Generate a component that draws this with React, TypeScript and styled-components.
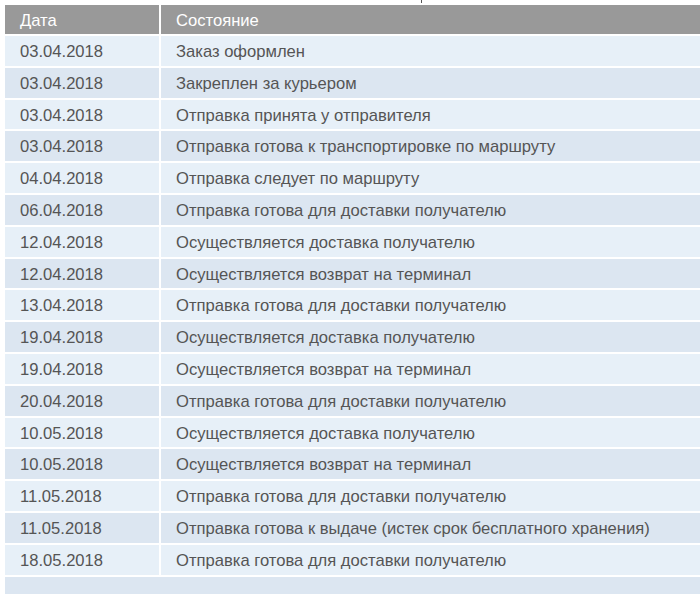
import styled, { createGlobalStyle } from 'styled-components';

const GlobalStyle = createGlobalStyle`
  html, body {
    margin: 0;
    padding: 0;
    background: #ffffff;
    overflow: hidden;
  }
  body {
    font-family: "Liberation Sans", Arial, sans-serif;
  }
`;

const rows: [string, string][] = [
  ['03.04.2018', 'Заказ оформлен'],
  ['03.04.2018', 'Закреплен за курьером'],
  ['03.04.2018', 'Отправка принята у отправителя'],
  ['03.04.2018', 'Отправка готова к транспортировке по маршруту'],
  ['04.04.2018', 'Отправка следует по маршруту'],
  ['06.04.2018', 'Отправка готова для доставки получателю'],
  ['12.04.2018', 'Осуществляется доставка получателю'],
  ['12.04.2018', 'Осуществляется возврат на терминал'],
  ['13.04.2018', 'Отправка готова для доставки получателю'],
  ['19.04.2018', 'Осуществляется доставка получателю'],
  ['19.04.2018', 'Осуществляется возврат на терминал'],
  ['20.04.2018', 'Отправка готова для доставки получателю'],
  ['10.05.2018', 'Осуществляется доставка получателю'],
  ['10.05.2018', 'Осуществляется возврат на терминал'],
  ['11.05.2018', 'Отправка готова для доставки получателю'],
  ['11.05.2018', 'Отправка готова к выдаче (истек срок бесплатного хранения)'],
  ['18.05.2018', 'Отправка готова для доставки получателю'],
];

const App = () => {
  return (
    <Page>
      <GlobalStyle />
      <Caption>
        <CaptionMark />
      </Caption>
      <Table>
        <HeaderCell>Дата</HeaderCell>
        <HeaderCell>Состояние</HeaderCell>
        {rows.map(([date, status], i) => (
          <Row key={i} odd={i % 2 === 1}>
            <Cell>{date}</Cell>
            <Cell>{status}</Cell>
          </Row>
        ))}
        <FooterRow />
      </Table>
    </Page>
  );
};

const Page = styled.div`
  width: 700px;
  height: 594px;
  overflow: hidden;
  padding-left: 5px;
  box-sizing: border-box;
`;

/* bottom of a caption line that lies above the visible area */
const Caption = styled.div`
  height: 5px;
  position: relative;
`;

const CaptionMark = styled.div`
  position: absolute;
  left: 416px;
  top: 0;
  width: 1px;
  height: 3px;
  background: #555;
`;

const Table = styled.div`
  display: grid;
  grid-template-columns: 154px 560px;
  column-gap: 2px;
  row-gap: 2px;
  width: 716px;
`;

const HeaderCell = styled.div`
  height: 29px;
  background: #999999;
  color: #ffffff;
  font-size: 16.6px;
  line-height: 31px;
  padding-left: 15px;
`;

const Row = styled.div<{ odd: boolean }>`
  display: contents;
  & > div {
    background: ${(p) => (p.odd ? '#dce6f1' : '#e7f0f8')};
  }
`;

const Cell = styled.div`
  height: 29.8px;
  color: #555555;
  font-size: 16.6px;
  line-height: 31px;
  padding-left: 15px;
  white-space: nowrap;
`;

const FooterRow = styled.div`
  grid-column: 1 / -1;
  height: 30px;
  background: #dce6f1;
`;

export default App;
